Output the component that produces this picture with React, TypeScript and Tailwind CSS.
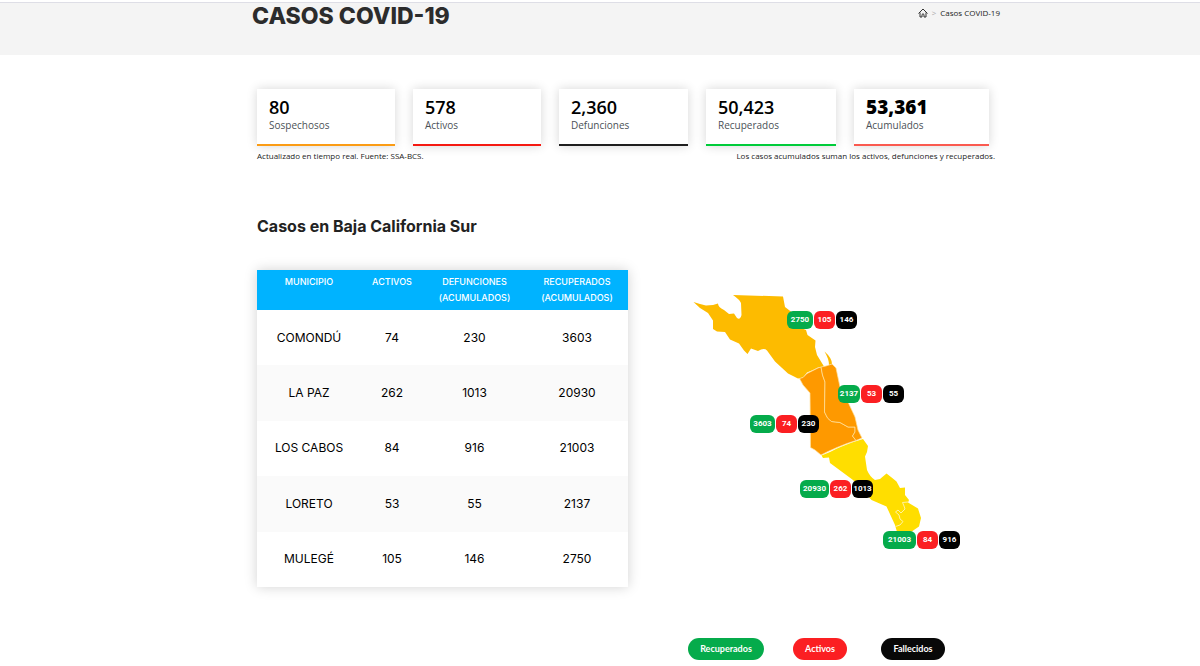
import React from "react";

interface Stat {
  value: string;
  label: string;
  border: string;
  bold?: boolean;
}

const stats: Stat[] = [
  { value: "80", label: "Sospechosos", border: "border-[#fb9c15]" },
  { value: "578", label: "Activos", border: "border-[#f51a12]" },
  { value: "2,360", label: "Defunciones", border: "border-[#1f1f1f]" },
  { value: "50,423", label: "Recuperados", border: "border-[#00cc3a]" },
  { value: "53,361", label: "Acumulados", border: "border-[#fa5a50]", bold: true },
];

const rows = [
  ["COMONDÚ", "74", "230", "3603"],
  ["LA PAZ", "262", "1013", "20930"],
  ["LOS CABOS", "84", "916", "21003"],
  ["LORETO", "53", "55", "2137"],
  ["MULEGÉ", "105", "146", "2750"],
];

// Pins on the map: position of each group plus the width of its first badge
const pins = [
  { name: "Mulegé", pos: "left-[107px] top-[31px]", first: "w-[26px]", values: ["2750", "105", "146"] },
  { name: "Loreto", pos: "left-[158px] top-[105px]", first: "w-[22px]", values: ["2137", "53", "55"] },
  { name: "Comondú", pos: "left-[70px] top-[135px]", first: "w-[25px]", values: ["3603", "74", "230"] },
  { name: "La Paz", pos: "left-[120px] top-[200px]", first: "w-[29px]", values: ["20930", "262", "1013"] },
  { name: "Los Cabos", pos: "left-[203px] top-[251px]", first: "w-[33px]", values: ["21003", "84", "916"] },
];

const StatCard: React.FC<Stat> = ({ value, label, border, bold }) => (
  <div className={`h-[57px] border-b-2 bg-white px-3 pt-[7px] shadow-[0_0_10px_rgba(0,0,0,0.16)] ${border}`}>
    <p className={`leading-[22px] text-black ${bold ? "text-[19px] font-extrabold" : "text-[18px] font-semibold"}`}>
      {value}
    </p>
    <p className="text-[10px] leading-[14px] text-[#4b5157]">{label}</p>
  </div>
);

const BajaMap: React.FC = () => (
  <div className="relative h-[280px] w-[300px]">
    <svg viewBox="680 280 300 280" className="h-full w-full" strokeLinejoin="round" role="img" aria-label="Baja California Sur">
      {/* Mulegé */}
      <path
        fill="#fdbb00"
        d="M693.5 302L700 304L706 305.500L713 305L718 303.500Q718 307 724 310L729 314L734 313.500L737 318Q740 320.500 741.500 315L741 303Q740 300 733 295L783 296.500L785 307L791.500 312L801 328L806 330L807.500 335L815.500 340.500L815 347L817 355L824 366.500L818 367.500L813 370L807 372.500L803 377.500L798 378.500L788 373.500L775 361.500L767 350.500Q764 347.500 758 351L751 348.500L747.500 354L744 350.500L739 343.500L730 339.500L725 332L717 331.500L713 329V320.500L708 313L700 308Z"
      />
      <path fill="#fdbb00" d="M824.500 351.500Q832 358 832 364L829 365Q829 359 824.500 351.500Z" />
      {/* Comondú */}
      <path
        fill="#fe9900"
        stroke="#ffe3a0"
        strokeWidth="0.7"
        d="M799.500 378.500L803 377.500L807 373.500L813 370.500L818 368L821 367L822.500 375L825 382L824.500 412Q827 419 831.500 421.500L840 422.500L848 427L855 427V432L852.500 436L856 440.500L847 443.500L837 447.500L828 451.500L821 455L815 450L810.500 447.500L810 393L803 385Z"
      />
      {/* Loreto */}
      <path
        fill="#fe9900"
        stroke="#ffe3a0"
        strokeWidth="0.7"
        d="M821 367L826 366L832 364L836 368L840 387L848 402L855 417L858 430L862 438L856 440.500L852.500 436L855 432V427L848 427L840 422.500L831.500 421.500Q827 419 824.500 412L825 382L822.500 375Z"
      />
      {/* La Paz */}
      <path
        fill="#ffde00"
        d="M821.500 455.500L830 452L837 448.500L843 446L852 442.500L863 439L868 446L867 452L865 456.500L867 470Q870 477 875 480L880 479L886.500 473.500L891 477L896.500 481.500L900 488L905 487.500V495L909 500L908 502.500L918 508.500L921 518L919 526.500L911 532H897L895 525L886.500 506.500L871.500 500L853 480L830 463L829 457.500L823 458Z"
      />
      {/* Los Cabos boundary */}
      <path
        fill="none"
        stroke="#fff2a0"
        strokeWidth="1"
        d="M908 502L902.500 502.500L904 506L905 509L901 513L898 510L895.500 512L899 515L900 519L903 521.500L900 525L895.500 526.500"
      />
    </svg>
    {pins.map((pin) => (
      <div
        key={pin.name}
        className={`absolute flex gap-px text-center font-[Roboto,sans-serif] text-[8px] leading-[18px] font-bold text-white ${pin.pos}`}
      >
        <span className={`h-[18px] rounded-md bg-[#05ab4b] ${pin.first}`}>{pin.values[0]}</span>
        <span className="h-[18px] w-[21px] rounded-md bg-[#fb1f22]">{pin.values[1]}</span>
        <span className="h-[18px] w-[21px] rounded-md bg-black">{pin.values[2]}</span>
      </div>
    ))}
  </div>
);

const App: React.FC = () => {
  return (
    <div className="font-['Open_Sans',sans-serif] text-black">
      <header className="mt-[2px] h-[53px] border-t border-[#dedee6] bg-[#f4f4f4]">
        <div className="ml-[21%] flex w-full max-w-[748px] items-start justify-between">
          <h1 className="font-[Inter,sans-serif] text-[23px] leading-[26px] font-extrabold text-[#2c2c2c]">
            CASOS COVID-19
          </h1>
          <nav aria-label="breadcrumb" className="flex items-center gap-1 pt-1 text-[8px] leading-[12px] text-[#222]">
            <a href="#" aria-label="Inicio">
              <svg viewBox="0 0 10 10" className="h-[10px] w-[10px]" fill="none" stroke="#333" strokeWidth="1">
                <path d="M0.500 5.500L5 1L9.500 5.500M2 4.500V9H4V6.500Q5 5 6 6.500V9H8V4.500" />
              </svg>
            </a>
            <span className="text-[#aaa]">&gt;</span>
            <a href="#">Casos COVID-19</a>
          </nav>
        </div>
      </header>

      <main className="ml-[21%] w-full max-w-[748px] px-[5px] pt-[34px]">
        <section>
          <div className="mr-[6px] grid grid-cols-[138fr_128fr_129fr_130fr_135fr] gap-[18px]">
            {stats.map((s) => (
              <StatCard key={s.label} {...s} />
            ))}
          </div>
          <div className="flex justify-between pt-1 text-[8px] leading-[12px] text-[#222]">
            <p>Actualizado en tiempo real. Fuente: SSA-BCS.</p>
            <p>Los casos acumulados suman los activos, defunciones y recuperados.</p>
          </div>
        </section>

        <h2 className="pt-[52px] font-[Inter,sans-serif] text-[16px] leading-[24px] font-bold text-[#222]">
          Casos en Baja California Sur
        </h2>

        <section className="flex items-start gap-[52px] pt-8">
          <table className="h-[317px] w-[371px] table-fixed border-collapse bg-white text-center font-[Inter,sans-serif] shadow-[0_0_12px_rgba(0,0,0,0.18)]">
            <colgroup>
              <col className="w-[104px]" />
              <col className="w-[62px]" />
              <col className="w-[103px]" />
              <col className="w-[102px]" />
            </colgroup>
            <thead className="bg-[#00b3ff] text-[9px] leading-[16px] text-white">
              <tr className="h-[40px] align-top">
                <th className="pt-1 font-medium">MUNICIPIO</th>
                <th className="pt-1 font-medium">ACTIVOS</th>
                <th className="pt-1 font-medium">DEFUNCIONES (ACUMULADOS)</th>
                <th className="pt-1 font-medium">RECUPERADOS (ACUMULADOS)</th>
              </tr>
            </thead>
            <tbody className="text-[12px] leading-[16px]">
              {rows.map((row) => (
                <tr key={row[0]} className="even:bg-[#fafafa]">
                  {row.map((cell, i) => (
                    <td key={i}>{cell}</td>
                  ))}
                </tr>
              ))}
            </tbody>
          </table>

          <div className="pt-[10px]">
            <BajaMap />
            <div className="flex pt-[78px] pl-2 text-center font-[Lato,sans-serif] text-[9px] leading-[22px] font-bold text-white">
              <span className="w-[76px] rounded-full bg-[#05ab4b]">Recuperados</span>
              <span className="ml-[29px] w-[54px] rounded-full bg-[#fb1f22]">Activos</span>
              <span className="ml-[34px] w-[64px] rounded-full bg-[#080808]">Fallecidos</span>
            </div>
          </div>
        </section>
      </main>
    </div>
  );
};

export default App;
